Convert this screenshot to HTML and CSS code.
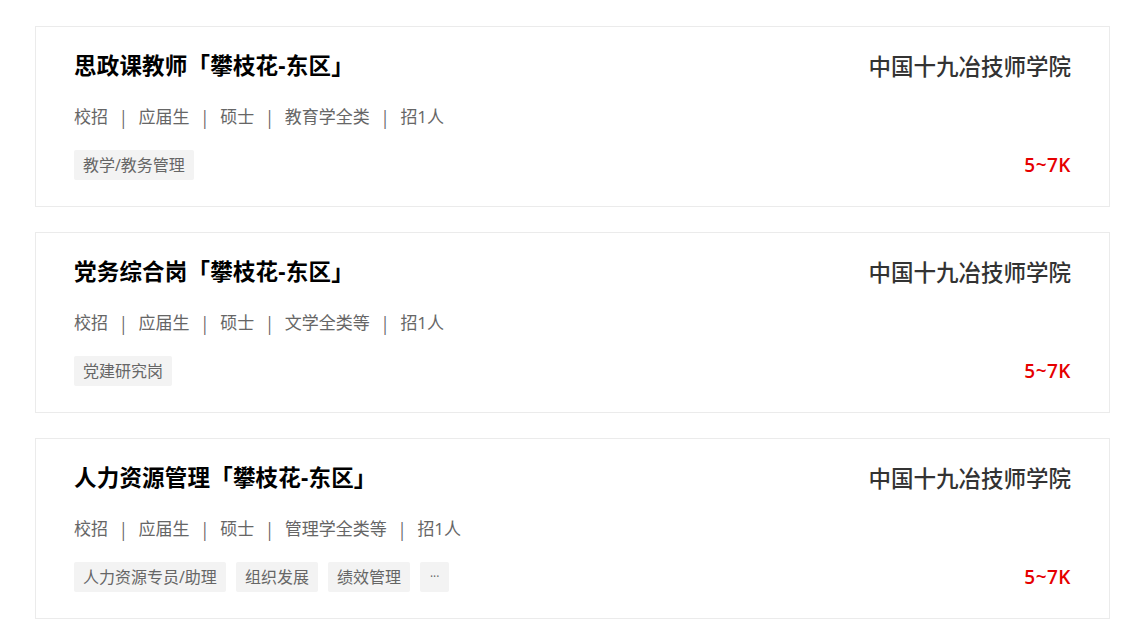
FILE: index.html
```html
<!DOCTYPE html>
<html lang="zh-CN">
<head>
<meta charset="utf-8">
<title>职位列表</title>
<link rel="stylesheet" href="styles.css">
</head>
<body>
<div class="job-list">
  <div class="job-card">
    <div class="job-main">
      <div class="job-title">思政课教师「攀枝花-东区」</div>
      <div class="job-meta"><span>校招</span><span class="sep">|</span><span>应届生</span><span class="sep">|</span><span>硕士</span><span class="sep">|</span><span>教育学全类</span><span class="sep">|</span><span>招1人</span></div>
      <div class="job-tags"><span class="tag">教学/教务管理</span></div>
    </div>
    <div class="job-side">
      <div class="company">中国十九冶技师学院</div>
      <div class="salary">5~7K</div>
    </div>
  </div>
  <div class="job-card">
    <div class="job-main">
      <div class="job-title">党务综合岗「攀枝花-东区」</div>
      <div class="job-meta"><span>校招</span><span class="sep">|</span><span>应届生</span><span class="sep">|</span><span>硕士</span><span class="sep">|</span><span>文学全类等</span><span class="sep">|</span><span>招1人</span></div>
      <div class="job-tags"><span class="tag">党建研究岗</span></div>
    </div>
    <div class="job-side">
      <div class="company">中国十九冶技师学院</div>
      <div class="salary">5~7K</div>
    </div>
  </div>
  <div class="job-card">
    <div class="job-main">
      <div class="job-title">人力资源管理「攀枝花-东区」</div>
      <div class="job-meta"><span>校招</span><span class="sep">|</span><span>应届生</span><span class="sep">|</span><span>硕士</span><span class="sep">|</span><span>管理学全类等</span><span class="sep">|</span><span>招1人</span></div>
      <div class="job-tags"><span class="tag">人力资源专员/助理</span><span class="tag">组织发展</span><span class="tag">绩效管理</span><span class="tag more">···</span></div>
    </div>
    <div class="job-side">
      <div class="company">中国十九冶技师学院</div>
      <div class="salary">5~7K</div>
    </div>
  </div>
</div>
</body>
</html>
```

FILE: styles.css
```css
html, body {
  margin: 0;
  padding: 0;
  background: #ffffff;
}
body {
  font-family: "Open Sans", "Noto Sans CJK SC", sans-serif;
  color: #333;
}
.job-list {
  padding: 26px 25px 0 35px;
  display: flex;
  flex-direction: column;
  gap: 25px;
}
.job-card {
  border: 1px solid #ebebeb;
  padding: 24px 38px 26px 38px;
  display: flex;
  justify-content: space-between;
}
.job-main {
  display: flex;
  flex-direction: column;
}
.job-title {
  font-size: 22.5px;
  line-height: 30px;
  font-weight: 700;
  color: #000;
  letter-spacing: 0.2px;
}
.job-meta {
  margin-top: 23px;
  font-size: 17px;
  line-height: 26px;
  color: #666;
  display: flex;
}
.sep {
  margin: 0 13px;
  font-family: "Noto Sans CJK SC", sans-serif;
}
.job-tags {
  margin-top: 20px;
  display: flex;
  gap: 10px;
}
.tag {
  background: #f3f3f3;
  color: #666;
  font-size: 16px;
  line-height: 30px;
  height: 30px;
  padding: 0 9px;
  border-radius: 2px;
}
.tag.more {
  font-size: 12px;
  padding: 0 10px;
}
.job-side {
  display: flex;
  flex-direction: column;
  justify-content: space-between;
  align-items: flex-end;
}
.company {
  font-size: 22.5px;
  line-height: 30px;
  font-weight: 500;
  color: #333;
  margin-top: 1px;
}
.salary {
  font-size: 19px;
  line-height: 30px;
  font-weight: 600;
  letter-spacing: 0.5px;
  color: #e60000;
}
```
